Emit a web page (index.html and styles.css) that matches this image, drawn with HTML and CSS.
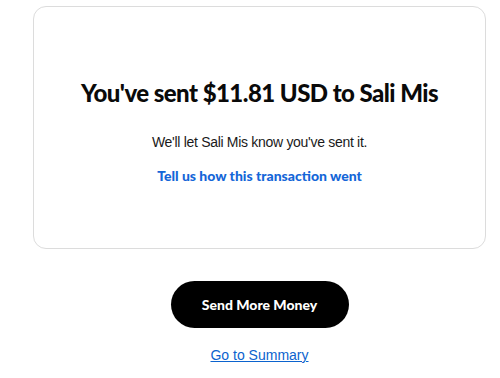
FILE: index.html
```html
<!DOCTYPE html>
<html lang="en">
<head>
<meta charset="utf-8">
<title>Money sent</title>
<link rel="stylesheet" href="styles.css">
</head>
<body>
<main class="page">
  <section class="card">
    <h1 class="title">You've sent $11.81 USD to Sali Mis</h1>
    <p class="note">We'll let Sali Mis know you've sent it.</p>
    <a class="feedback" href="#">Tell us how this transaction went</a>
  </section>
  <div class="actions">
    <button class="primary" type="button">Send More Money</button>
    <a class="summary" href="#">Go to Summary</a>
  </div>
</main>
</body>
</html>
```
FILE: styles.css
```css
* { box-sizing: border-box; }
html, body { margin: 0; background: #fff; }
body { font-family: "Liberation Sans", Arial, sans-serif; color: #111; }
.page {
  padding: 6px 14px 0 33px;
  display: flex;
  flex-direction: column;
}
.card {
  height: 243px;
  border: 1px solid #dcdcdc;
  border-radius: 13px;
  display: flex;
  flex-direction: column;
  align-items: center;
  padding-top: 71px;
}
.title {
  margin: 0;
  font-family: Lato, sans-serif;
  font-weight: 900;
  font-size: 24px;
  line-height: 30px;
  letter-spacing: -0.55px;
  color: #0a0a0a;
}
.note {
  margin: 25px 0 0;
  font-size: 14px;
  line-height: 18px;
  letter-spacing: -0.3px;
  color: #1a1a1a;
}
.feedback {
  margin-top: 16px;
  font-family: Lato, sans-serif;
  font-weight: 900;
  font-size: 14px;
  line-height: 18px;
  color: #1466d8;
  text-decoration: none;
}
.actions {
  display: flex;
  flex-direction: column;
  align-items: center;
  padding-top: 32px;
}
.primary {
  width: 178px;
  height: 47px;
  border: 0;
  border-radius: 24px;
  background: #000;
  color: #fff;
  font-family: Lato, sans-serif;
  font-weight: 900;
  font-size: 14px;
}
.summary {
  margin-top: 18px;
  font-size: 14px;
  line-height: 18px;
  color: #0b63ce;
  text-decoration: underline;
}
```
